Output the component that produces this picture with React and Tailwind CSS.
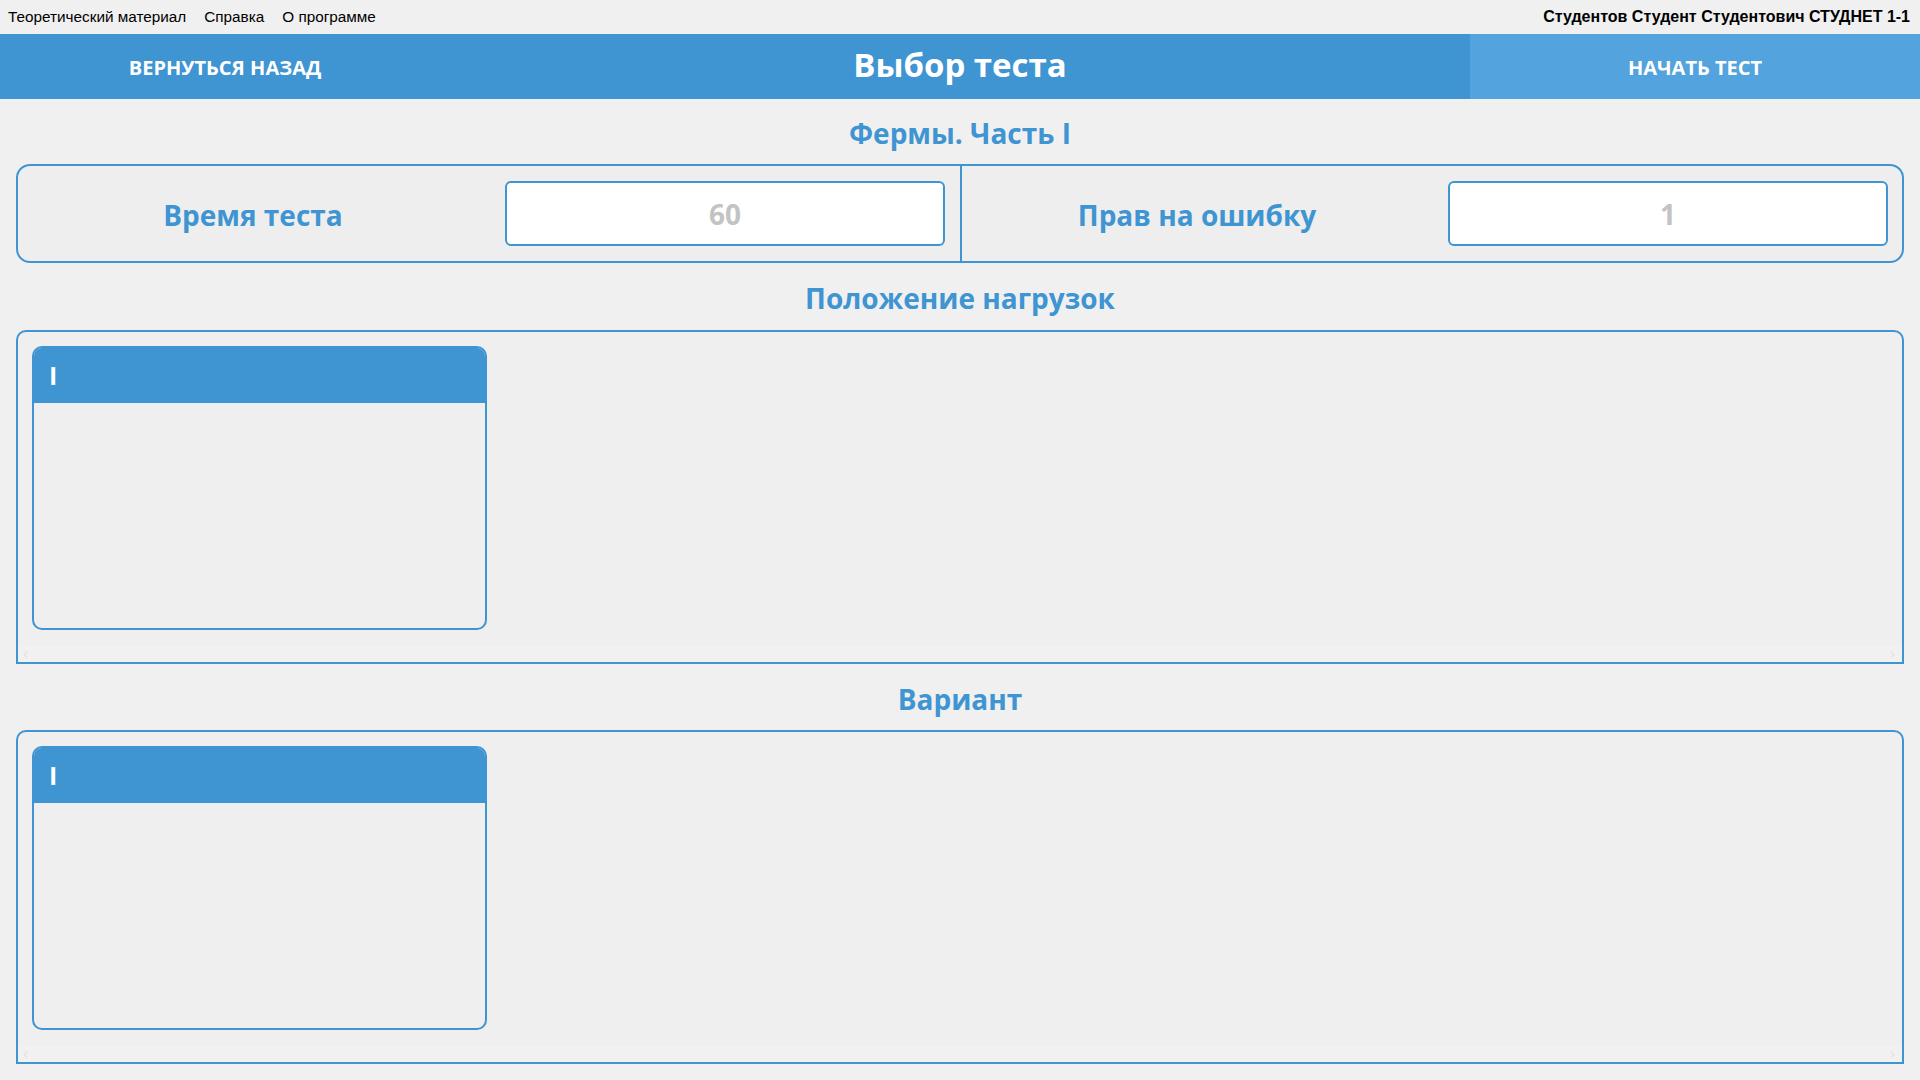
import { ChevronLeft, ChevronRight } from "lucide-react";

const SectionTitle = ({ children, h }) => (
  <div
    className={`flex items-center justify-center pt-[3px] text-[#3f94d2] font-bold text-[28px] ${h}`}
  >
    {children}
  </div>
);

const VariantCard = ({ label }) => (
  <div className="w-[455px] h-[284px] border-2 border-[#3f94d2] rounded-[10px] overflow-hidden">
    <div className="h-[55px] bg-[#3f94d2] flex items-center pl-[15px] text-white font-bold text-[25px]">
      {label}
    </div>
  </div>
);

const ScrollPanel = ({ children }) => (
  <div className="h-[334px] border-2 border-[#3f94d2] rounded-t-[10px] flex flex-col bg-[#efefef]">
    <div className="flex-1 pt-[14px] pl-[14px]">{children}</div>
    <div className="h-[16px] bg-[#f1f1f1] flex items-center justify-between pl-[2px] pr-[4px] text-[#d2d2d2]">
      <ChevronLeft size={11} strokeWidth={2} />
      <ChevronRight size={11} strokeWidth={2} />
    </div>
  </div>
);

const NumberField = ({ value }) => (
  <div className="h-[65px] w-[440px] bg-white border-2 border-[#3f94d2] rounded-[6px] flex items-center justify-center text-[28px] font-bold text-[#c3c3c3]">
    {value}
  </div>
);

const App = () => {
  return (
    <div
      className="w-[1920px] h-[1080px] bg-[#f0f0f0] flex flex-col overflow-hidden"
      style={{ fontFamily: '"Open Sans", "Noto Sans", sans-serif' }}
    >
      {/* menu */}
      <div
        className="h-[34px] flex items-center justify-between pl-[8px] pr-[10px] text-black"
        style={{ fontFamily: '"Liberation Sans", Arial, sans-serif' }}
      >
        <div className="flex items-center gap-[18px] text-[15.3px]">
          <span>Теоретический материал</span>
          <span>Справка</span>
          <span>О программе</span>
        </div>
        <span className="font-bold text-[16px]">Студентов Студент Студентович СТУДНЕТ 1-1</span>
      </div>

      {/* header */}
      <div className="h-[65px] flex bg-[#3f94d2] text-white">
        <div className="w-[450px] flex items-center justify-center pt-[2px] font-bold text-[20px]">
          ВЕРНУТЬСЯ НАЗАД
        </div>
        <div className="flex-1 flex items-center justify-center font-bold text-[33px] pb-[3px]">
          Выбор теста
        </div>
        <div className="w-[450px] bg-[#53a3de] flex items-center justify-center pt-[2px] font-bold text-[20px]">
          НАЧАТЬ ТЕСТ
        </div>
      </div>

      <div className="px-[16px] flex flex-col">
        <SectionTitle h="h-[65px]">Фермы. Часть I</SectionTitle>

        <div className="h-[99px] border-2 border-[#3f94d2] rounded-[14px] flex bg-[#eeeeee]">
          <div className="w-[944px] border-r-2 border-[#3f94d2] flex items-center">
            <div className="w-[470px] text-center text-[#3f94d2] font-bold text-[28px] pt-[2px]">
              Время теста
            </div>
            <div className="ml-[17px]">
              <NumberField value="60" />
            </div>
          </div>
          <div className="flex-1 flex items-center">
            <div className="w-[470px] text-center text-[#3f94d2] font-bold text-[28px] pt-[2px]">
              Прав на ошибку
            </div>
            <div className="ml-[16px]">
              <NumberField value="1" />
            </div>
          </div>
        </div>

        <SectionTitle h="h-[67px]">Положение нагрузок</SectionTitle>
        <ScrollPanel>
          <VariantCard label="I" />
        </ScrollPanel>

        <SectionTitle h="h-[66px]">Вариант</SectionTitle>
        <ScrollPanel>
          <VariantCard label="I" />
        </ScrollPanel>
      </div>
    </div>
  );
};

export default App;
